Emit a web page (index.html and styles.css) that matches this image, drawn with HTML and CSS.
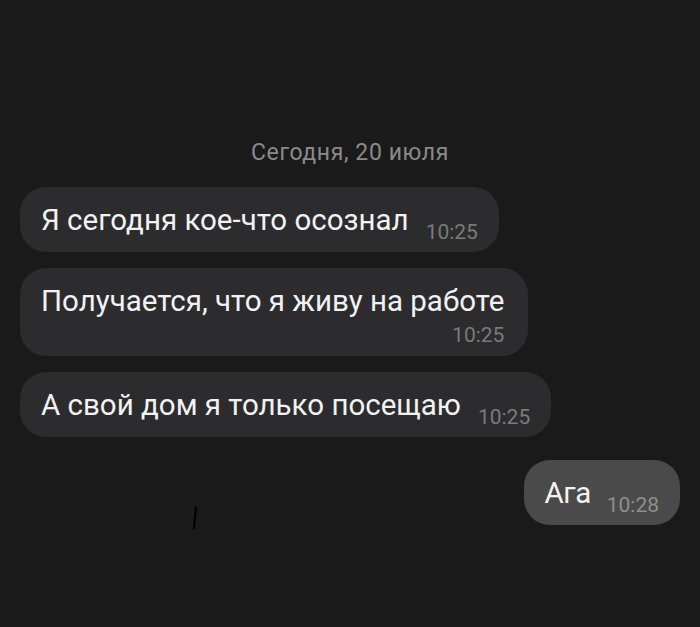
FILE: index.html
```html
<!DOCTYPE html>
<html lang="ru">
<head>
    <meta charset="UTF-8">
    <meta name="viewport" content="width=device-width, initial-scale=1.0">
    <title>Чат</title>
    <link rel="stylesheet" href="styles.css">
</head>
<body>
    <div class="chat">
        <div class="date">Сегодня, 20 июля</div>

        <div class="bubble incoming">
            <span class="text">Я сегодня кое-что осознал</span><span class="time">10:25</span>
        </div>

        <div class="bubble incoming stacked">
            <span class="text">Получается, что я живу на работе</span><span class="time">10:25</span>
        </div>

        <div class="bubble incoming">
            <span class="text">А свой дом я только посещаю</span><span class="time">10:25</span>
        </div>

        <div class="bubble outgoing">
            <span class="text">Ага</span><span class="time">10:28</span>
        </div>
    </div>

    <svg class="scratch" width="8" height="24" viewBox="0 0 8 24">
        <path d="M5 1 L3 22" stroke="#000" stroke-width="2" stroke-linecap="round"/>
    </svg>
</body>
</html>
```

FILE: styles.css
```css
* {
    box-sizing: border-box;
    margin: 0;
    padding: 0;
}

body {
    background-color: #1a1a1a;
    font-family: Roboto, 'Noto Sans', sans-serif;
    height: 627px;
    overflow: hidden;
    position: relative;
}

.chat {
    display: flex;
    flex-direction: column;
    align-items: flex-start;
    padding: 140px 20px 0;
}

.date {
    align-self: center;
    color: #8a8a8a;
    font-size: 23px;
    letter-spacing: 0.6px;
    line-height: 26px;
    margin-bottom: 21px;
}

.bubble {
    background-color: #2c2c2e;
    color: #f2f2f2;
    border-radius: 26px;
    padding: 16px 21px 15px 21px;
    font-size: 29.5px;
    line-height: 34px;
    margin-bottom: 16px;
    white-space: nowrap;
}

.bubble .time {
    color: #7a7a7a;
    font-size: 21px;
    line-height: 10px;
    margin-left: 17px;
    vertical-align: -9px;
}

.stacked {
    padding-bottom: 11px;
    padding-right: 24px;
}

.stacked .time {
    display: block;
    text-align: right;
    line-height: 20px;
    margin-top: 7px;
    margin-left: 0;
    vertical-align: baseline;
}

.outgoing {
    align-self: flex-end;
    background-color: #4a4a4a;
    margin-top: 7px;
    letter-spacing: -0.5px;
}

.outgoing .time {
    color: #8e8e8e;
    letter-spacing: 0;
    margin-left: 16px;
}

.scratch {
    position: absolute;
    left: 191px;
    top: 506px;
}
```
